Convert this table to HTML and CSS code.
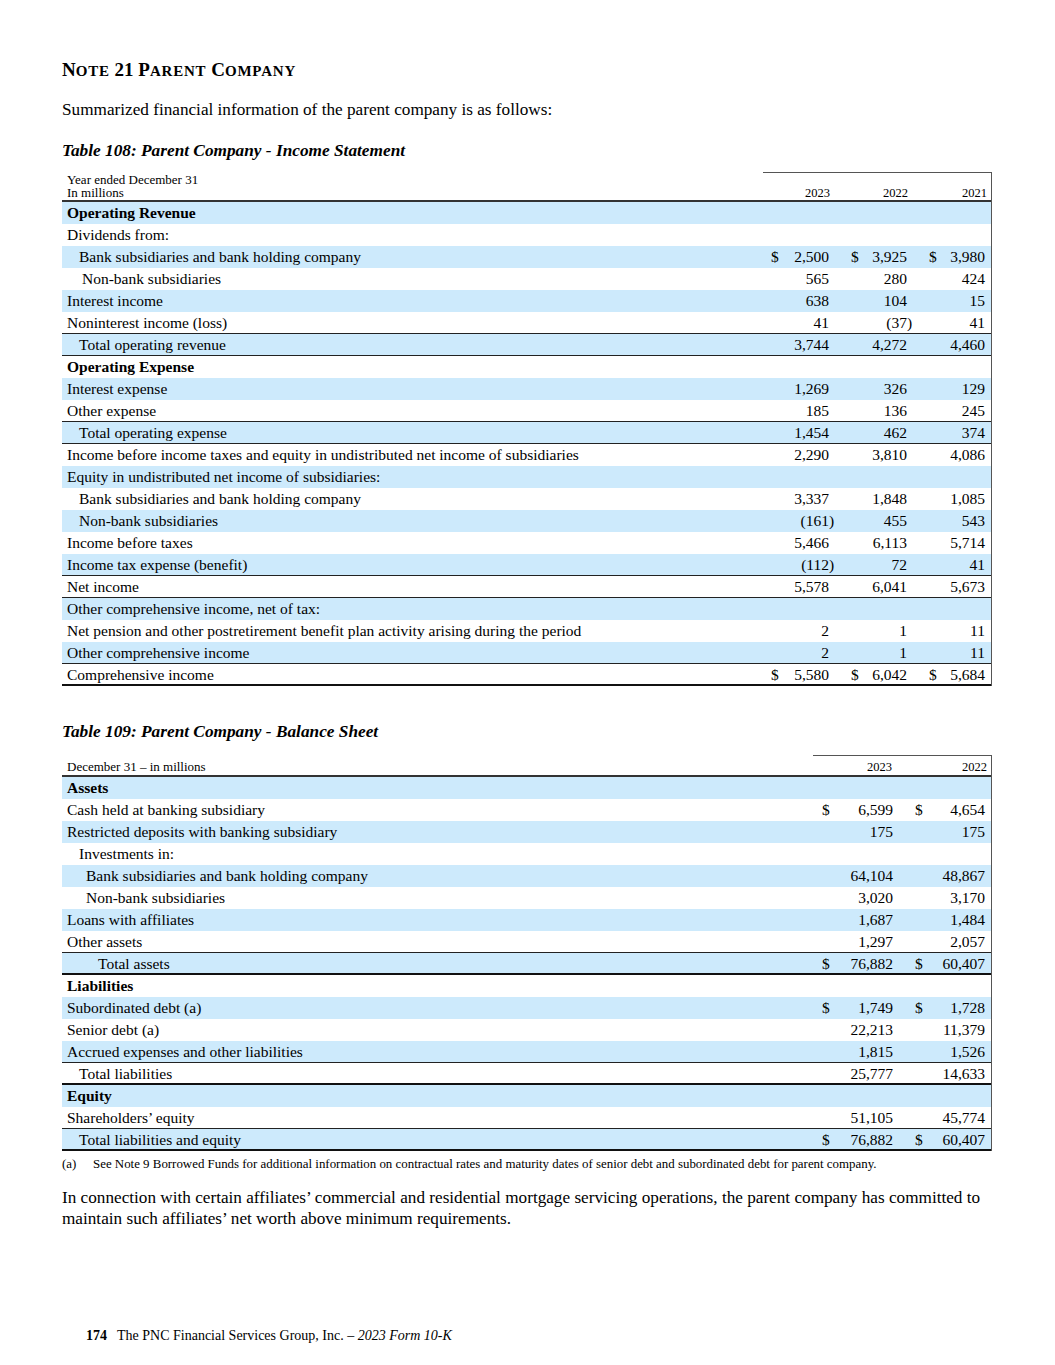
FILE: index.html
```html
<!DOCTYPE html>
<html lang="en">
<head>
<meta charset="utf-8">
<title>Note 21 Parent Company</title>
<link rel="stylesheet" href="styles.css">
</head>
<body>
<div class="page">
  <h1 class="note">N<span class="sc">OTE</span> 21 P<span class="sc">ARENT</span> C<span class="sc">OMPANY</span></h1>
  <p class="intro">Summarized financial information of the parent company is as follows:</p>

  <h2 class="ttl">Table 108: Parent Company - Income Statement</h2>
  <div class="tbl">
    <table class="t1">
      <colgroup><col><col class="g1"><col class="g2"><col class="g3"></colgroup>
      <thead>
        <tr class="hd">
          <th class="lbl"><div>Year ended December 31</div><div>In millions</div></th>
          <th class="hn"><div class="v g1v"><span></span><span>2023</span></div></th>
          <th class="hn"><div class="v g2v"><span></span><span>2022</span></div></th>
          <th class="hn"><div class="v g3v"><span></span><span>2021</span></div></th>
        </tr>
      </thead>
      <tbody>
        <tr class="b"><td class="lbl bold">Operating Revenue</td><td></td><td></td><td></td></tr>
        <tr><td class="lbl">Dividends from:</td><td></td><td></td><td></td></tr>
        <tr class="b"><td class="lbl i1">Bank subsidiaries and bank holding company</td>
          <td><div class="v g1v"><span>$</span><span>2,500</span></div></td>
          <td><div class="v g2v"><span>$</span><span>3,925</span></div></td>
          <td><div class="v g3v"><span>$</span><span>3,980</span></div></td></tr>
        <tr><td class="lbl i1b">Non-bank subsidiaries</td>
          <td><div class="v g1v"><span></span><span>565</span></div></td>
          <td><div class="v g2v"><span></span><span>280</span></div></td>
          <td><div class="v g3v"><span></span><span>424</span></div></td></tr>
        <tr class="b"><td class="lbl">Interest income</td>
          <td><div class="v g1v"><span></span><span>638</span></div></td>
          <td><div class="v g2v"><span></span><span>104</span></div></td>
          <td><div class="v g3v"><span></span><span>15</span></div></td></tr>
        <tr class="ln"><td class="lbl">Noninterest income (loss)</td>
          <td><div class="v g1v"><span></span><span>41</span></div></td>
          <td><div class="v g2v"><span></span><span>(37<span class="rp">)</span></span></div></td>
          <td><div class="v g3v"><span></span><span>41</span></div></td></tr>
        <tr class="b ln"><td class="lbl i1">Total operating revenue</td>
          <td><div class="v g1v"><span></span><span>3,744</span></div></td>
          <td><div class="v g2v"><span></span><span>4,272</span></div></td>
          <td><div class="v g3v"><span></span><span>4,460</span></div></td></tr>
        <tr><td class="lbl bold">Operating Expense</td><td></td><td></td><td></td></tr>
        <tr class="b"><td class="lbl">Interest expense</td>
          <td><div class="v g1v"><span></span><span>1,269</span></div></td>
          <td><div class="v g2v"><span></span><span>326</span></div></td>
          <td><div class="v g3v"><span></span><span>129</span></div></td></tr>
        <tr class="ln"><td class="lbl">Other expense</td>
          <td><div class="v g1v"><span></span><span>185</span></div></td>
          <td><div class="v g2v"><span></span><span>136</span></div></td>
          <td><div class="v g3v"><span></span><span>245</span></div></td></tr>
        <tr class="b ln"><td class="lbl i1">Total operating expense</td>
          <td><div class="v g1v"><span></span><span>1,454</span></div></td>
          <td><div class="v g2v"><span></span><span>462</span></div></td>
          <td><div class="v g3v"><span></span><span>374</span></div></td></tr>
        <tr><td class="lbl">Income before income taxes and equity in undistributed net income of subsidiaries</td>
          <td><div class="v g1v"><span></span><span>2,290</span></div></td>
          <td><div class="v g2v"><span></span><span>3,810</span></div></td>
          <td><div class="v g3v"><span></span><span>4,086</span></div></td></tr>
        <tr class="b"><td class="lbl">Equity in undistributed net income of subsidiaries:</td><td></td><td></td><td></td></tr>
        <tr><td class="lbl i1">Bank subsidiaries and bank holding company</td>
          <td><div class="v g1v"><span></span><span>3,337</span></div></td>
          <td><div class="v g2v"><span></span><span>1,848</span></div></td>
          <td><div class="v g3v"><span></span><span>1,085</span></div></td></tr>
        <tr class="b"><td class="lbl i1">Non-bank subsidiaries</td>
          <td><div class="v g1v"><span></span><span>(161<span class="rp">)</span></span></div></td>
          <td><div class="v g2v"><span></span><span>455</span></div></td>
          <td><div class="v g3v"><span></span><span>543</span></div></td></tr>
        <tr><td class="lbl">Income before taxes</td>
          <td><div class="v g1v"><span></span><span>5,466</span></div></td>
          <td><div class="v g2v"><span></span><span>6,113</span></div></td>
          <td><div class="v g3v"><span></span><span>5,714</span></div></td></tr>
        <tr class="b ln"><td class="lbl">Income tax expense (benefit)</td>
          <td><div class="v g1v"><span></span><span>(112<span class="rp">)</span></span></div></td>
          <td><div class="v g2v"><span></span><span>72</span></div></td>
          <td><div class="v g3v"><span></span><span>41</span></div></td></tr>
        <tr class="ln"><td class="lbl">Net income</td>
          <td><div class="v g1v"><span></span><span>5,578</span></div></td>
          <td><div class="v g2v"><span></span><span>6,041</span></div></td>
          <td><div class="v g3v"><span></span><span>5,673</span></div></td></tr>
        <tr class="b"><td class="lbl">Other comprehensive income, net of tax:</td><td></td><td></td><td></td></tr>
        <tr><td class="lbl">Net pension and other postretirement benefit plan activity arising during the period</td>
          <td><div class="v g1v"><span></span><span>2</span></div></td>
          <td><div class="v g2v"><span></span><span>1</span></div></td>
          <td><div class="v g3v"><span></span><span>11</span></div></td></tr>
        <tr class="b ln"><td class="lbl">Other comprehensive income</td>
          <td><div class="v g1v"><span></span><span>2</span></div></td>
          <td><div class="v g2v"><span></span><span>1</span></div></td>
          <td><div class="v g3v"><span></span><span>11</span></div></td></tr>
        <tr class="lnk"><td class="lbl">Comprehensive income</td>
          <td><div class="v g1v"><span>$</span><span>5,580</span></div></td>
          <td><div class="v g2v"><span>$</span><span>6,042</span></div></td>
          <td><div class="v g3v"><span>$</span><span>5,684</span></div></td></tr>
      </tbody>
    </table>
  </div>

  <h2 class="ttl ttl2">Table 109: Parent Company - Balance Sheet</h2>
  <div class="tbl tbl2">
    <table class="t2">
      <colgroup><col><col class="h1"><col class="h2"></colgroup>
      <thead>
        <tr class="hd2">
          <th class="lbl">December 31 – in millions</th>
          <th class="hn"><div class="v h1v"><span></span><span>2023</span></div></th>
          <th class="hn"><div class="v h2v"><span></span><span>2022</span></div></th>
        </tr>
      </thead>
      <tbody>
        <tr class="b"><td class="lbl bold">Assets</td><td></td><td></td></tr>
        <tr><td class="lbl">Cash held at banking subsidiary</td>
          <td><div class="v h1v"><span>$</span><span>6,599</span></div></td>
          <td><div class="v h2v"><span>$</span><span>4,654</span></div></td></tr>
        <tr class="b"><td class="lbl">Restricted deposits with banking subsidiary</td>
          <td><div class="v h1v"><span></span><span>175</span></div></td>
          <td><div class="v h2v"><span></span><span>175</span></div></td></tr>
        <tr><td class="lbl i1">Investments in:</td><td></td><td></td></tr>
        <tr class="b"><td class="lbl i2">Bank subsidiaries and bank holding company</td>
          <td><div class="v h1v"><span></span><span>64,104</span></div></td>
          <td><div class="v h2v"><span></span><span>48,867</span></div></td></tr>
        <tr><td class="lbl i2">Non-bank subsidiaries</td>
          <td><div class="v h1v"><span></span><span>3,020</span></div></td>
          <td><div class="v h2v"><span></span><span>3,170</span></div></td></tr>
        <tr class="b"><td class="lbl">Loans with affiliates</td>
          <td><div class="v h1v"><span></span><span>1,687</span></div></td>
          <td><div class="v h2v"><span></span><span>1,484</span></div></td></tr>
        <tr class="ln"><td class="lbl">Other assets</td>
          <td><div class="v h1v"><span></span><span>1,297</span></div></td>
          <td><div class="v h2v"><span></span><span>2,057</span></div></td></tr>
        <tr class="b lnk"><td class="lbl i3">Total assets</td>
          <td><div class="v h1v"><span>$</span><span>76,882</span></div></td>
          <td><div class="v h2v"><span>$</span><span>60,407</span></div></td></tr>
        <tr><td class="lbl bold">Liabilities</td><td></td><td></td></tr>
        <tr class="b"><td class="lbl">Subordinated debt (a)</td>
          <td><div class="v h1v"><span>$</span><span>1,749</span></div></td>
          <td><div class="v h2v"><span>$</span><span>1,728</span></div></td></tr>
        <tr><td class="lbl">Senior debt (a)</td>
          <td><div class="v h1v"><span></span><span>22,213</span></div></td>
          <td><div class="v h2v"><span></span><span>11,379</span></div></td></tr>
        <tr class="b ln"><td class="lbl">Accrued expenses and other liabilities</td>
          <td><div class="v h1v"><span></span><span>1,815</span></div></td>
          <td><div class="v h2v"><span></span><span>1,526</span></div></td></tr>
        <tr class="lnk"><td class="lbl i1">Total liabilities</td>
          <td><div class="v h1v"><span></span><span>25,777</span></div></td>
          <td><div class="v h2v"><span></span><span>14,633</span></div></td></tr>
        <tr class="b"><td class="lbl bold">Equity</td><td></td><td></td></tr>
        <tr class="ln"><td class="lbl">Shareholders’ equity</td>
          <td><div class="v h1v"><span></span><span>51,105</span></div></td>
          <td><div class="v h2v"><span></span><span>45,774</span></div></td></tr>
        <tr class="b lnk"><td class="lbl i1">Total liabilities and equity</td>
          <td><div class="v h1v"><span>$</span><span>76,882</span></div></td>
          <td><div class="v h2v"><span>$</span><span>60,407</span></div></td></tr>
      </tbody>
    </table>
  </div>
  <div class="fn"><span class="fnk">(a)</span><span>See Note 9 Borrowed Funds for additional information on contractual rates and maturity dates of senior debt and subordinated debt for parent company.</span></div>

  <p class="para">In connection with certain affiliates’ commercial and residential mortgage servicing operations, the parent company has committed to maintain such affiliates’ net worth above minimum requirements.</p>

  <div class="footer"><span class="pg">174</span><span>The PNC Financial Services Group, Inc. – <em>2023 Form 10-K</em></span></div>
</div>
</body>
</html>
```

FILE: styles.css
```css
* { box-sizing: border-box; }
body {
  margin: 0;
  background: #fff;
  color: #000;
  font-family: "Liberation Serif", "Times New Roman", serif;
}
.page {
  width: 930px;
  margin-left: 62px;
  padding-top: 59px;
}
.note {
  margin: 0;
  font-size: 19px;
  line-height: 22px;
  font-weight: bold;
}
.note .sc { font-size: 15px; letter-spacing: 0.8px; }
.intro {
  margin: 18px 0 0;
  font-size: 17.2px;
  line-height: 20px;
}
.ttl {
  margin: 21px 0 0;
  font-size: 17.3px;
  line-height: 20px;
  font-weight: bold;
  font-style: italic;
}
.ttl2 { margin-top: 36px; }
.tbl {
  margin-top: 11px;
  border-right: 1px solid #555;
}
.tbl2 { margin-top: 13px; }
table {
  width: 100%;
  border-collapse: collapse;
  table-layout: fixed;
  font-size: 15.5px;
}
col.g1 { width: 73px; }
col.g2 { width: 78px; }
col.g3 { width: 77px; }
col.h1 { width: 85px; }
col.h2 { width: 93px; }
th, td {
  padding: 0;
  height: 22px;
  line-height: 22px;
  white-space: nowrap;
  font-weight: normal;
  vertical-align: middle;
}
.lbl { text-align: left; padding-left: 5px; }
.bold { font-weight: bold; }
.i1 { padding-left: 17px; }
.i1b { padding-left: 20px; }
.i2 { padding-left: 24px; }
.i3 { padding-left: 36px; }
tr.b td { background: #cdeafc; }
tr.ln td { box-shadow: inset 0 -1px 0 #222; }
tr.lnk td { box-shadow: inset 0 -2px 0 #111; }
.hd th, .hd2 th {
  font-size: 13px;
  box-shadow: inset 0 -2px 0 #333;
}
.hd th.hn, .hd2 th.hn { font-size: 12.5px; }
.hd th { height: 30px; line-height: 12.5px; vertical-align: bottom; padding-bottom: 3px; }
.hd2 th { height: 22px; line-height: 14px; vertical-align: bottom; padding-bottom: 3px; }
.hd th.hn, .hd2 th.hn {
  box-shadow: inset 0 -2px 0 #333, inset 0 1px 0 #555;
}
.v {
  display: flex;
  justify-content: space-between;
  align-items: baseline;
}
.g1v { padding-left: 8px; padding-right: 7px; }
.g2v { padding-left: 15px; padding-right: 7px; }
.g3v { padding-left: 15px; padding-right: 6px; }
.h1v { padding-left: 9px; padding-right: 5px; }
.h2v { padding-left: 17px; padding-right: 6px; }
th .v { padding-right: 6px; }
th .g3v { padding-right: 4px; }
th .h2v { padding-right: 4px; }
.rp { display: inline-block; width: 0; overflow: visible; }
.fn {
  display: flex;
  margin-top: 6px;
  font-size: 12.9px;
  line-height: 14px;
}
.fnk { width: 31px; flex: none; }
.para {
  margin: 16px 0 0;
  font-size: 17.2px;
  line-height: 21px;
}
.footer {
  margin-top: 99px;
  padding-left: 24px;
  font-size: 14px;
  line-height: 16px;
}
.pg { font-weight: bold; margin-right: 10px; }
```
